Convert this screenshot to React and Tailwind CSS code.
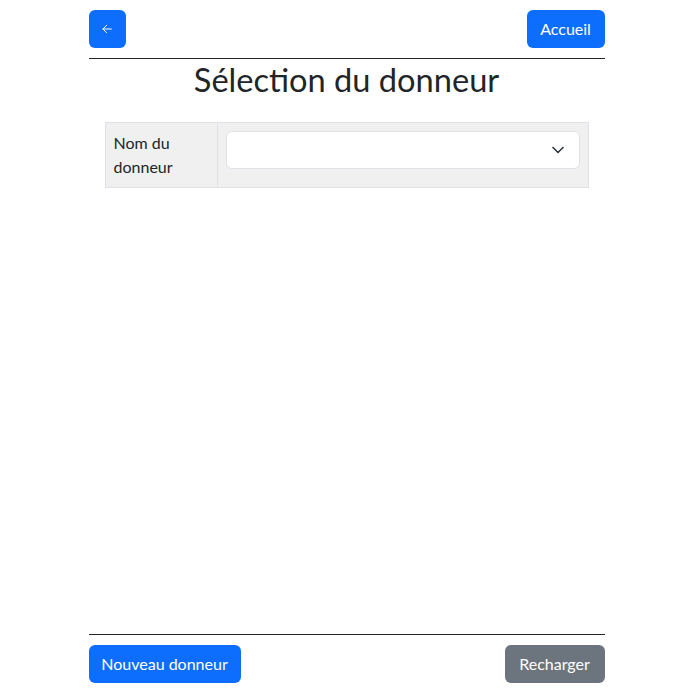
export default function App() {
    return (
        <div
            className="h-screen flex flex-col bg-white text-[#212529]"
            style={{ fontFamily: 'Lato, sans-serif' }}
        >
            <div className="w-[516px] mx-auto flex flex-col flex-1">
                {/* top bar */}
                <div className="flex items-center justify-between pt-[10px]">
                    <button className="w-[37px] h-[38px] rounded-md bg-[#0d6efd] text-white flex items-center justify-center">
                        <svg width="10" height="10" viewBox="0 0 16 16" fill="none" stroke="currentColor" strokeWidth="1.6" strokeLinecap="round" strokeLinejoin="round">
                            <path d="M15 8H1.5" />
                            <path d="M7.5 2L1.5 8l6 6" />
                        </svg>
                    </button>
                    <button className="h-[38px] w-[78px] rounded-md bg-[#0d6efd] text-white text-base leading-6">
                        Accueil
                    </button>
                </div>
                <hr className="mt-[10px] border-t border-[#212529]" />

                <h1 className="text-center text-[32.6px] leading-[38px] mt-[2px] mb-[23px]">
                    Sélection du donneur
                </h1>

                <table className="mx-4 border-collapse text-base leading-6">
                    <tbody>
                        <tr className="bg-[#f0f0f0]">
                            <td className="w-[112px] border border-[#dee2e6] p-2 align-top">
                                Nom du donneur
                            </td>
                            <td className="border border-[#dee2e6] p-2 align-top">
                                <div className="h-[38px] rounded-md border border-[#dee2e6] bg-white flex items-center justify-end pr-[14px]">
                                    <svg width="14" height="10" viewBox="0 0 16 12" fill="none" stroke="#343a40" strokeWidth="2" strokeLinecap="round" strokeLinejoin="round">
                                        <path d="M2 3l6 6 6-6" />
                                    </svg>
                                </div>
                            </td>
                        </tr>
                    </tbody>
                </table>

                <div className="flex-1" />

                {/* footer */}
                <hr className="border-t border-[#212529]" />
                <div className="flex items-center justify-between pt-[10px] pb-[10px]">
                    <button className="h-[38px] w-[152px] rounded-md bg-[#0d6efd] text-white text-base leading-6">
                        Nouveau donneur
                    </button>
                    <button className="h-[38px] w-[100px] rounded-md bg-[#6c757d] text-white text-base leading-6">
                        Recharger
                    </button>
                </div>
            </div>
        </div>
    );
}
